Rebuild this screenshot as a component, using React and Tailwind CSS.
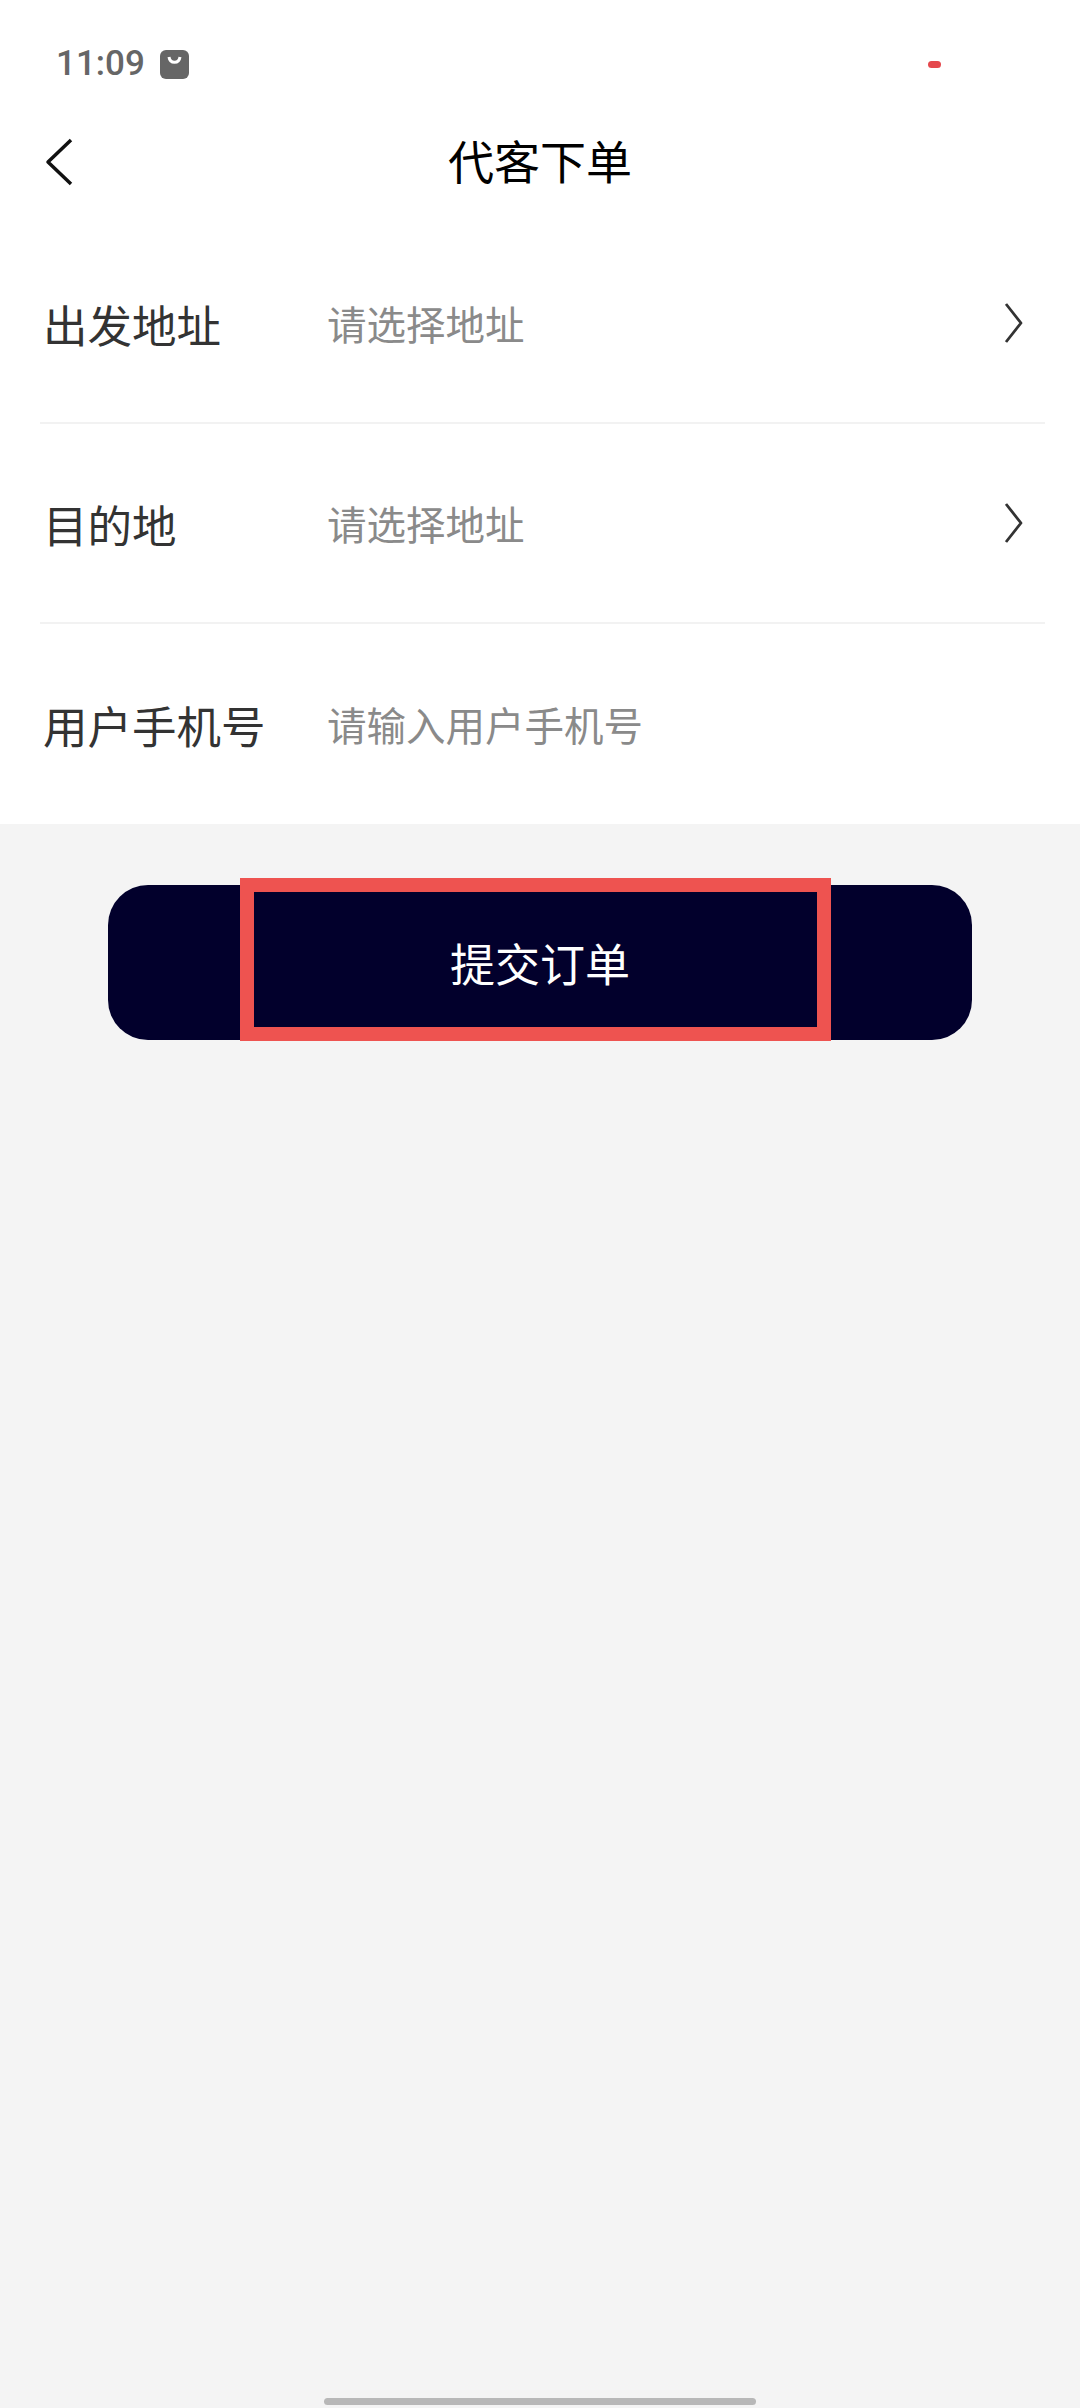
const cjk = "font-['Noto_Sans_CJK_SC','Noto_Sans',sans-serif]";

function FormRow({ label, placeholder, hasArrow, divider }) {
  return (
    <div className={divider ? "flex h-[200px] items-center border-b-2 border-[#f2f2f2]" : "flex h-[200px] items-center"}>
      <span className="w-[287px] shrink-0 pl-[3px] pt-[2px] text-[44.5px] font-normal text-[#333333]">{label}</span>
      <span className="flex-1 text-[39.5px] font-normal text-[#8a8a8a]">{placeholder}</span>
      {hasArrow ? (
        <svg className="mr-[20px] h-[42px] w-[22px]" viewBox="0 0 22 42" fill="none">
          <path d="M3 2 L18 21 L3 40" stroke="#333333" strokeWidth="2.8" strokeLinejoin="round" />
        </svg>
      ) : null}
    </div>
  );
}

export default function App() {
  return (
    <div className={`flex h-[2408px] w-[1080px] flex-col bg-[#f4f4f4] ${cjk}`}>
      <div className="bg-white">
        <div className="flex h-[100px] items-center pl-[56px] pr-[139px] pt-[28px]">
          <span className="font-['Roboto',sans-serif] text-[35px] font-medium text-[#666666]">11:09</span>
          <svg className="ml-[15px] h-[29px] w-[29px]" viewBox="0 0 29 29">
            <rect width="29" height="29" rx="6" fill="#666666" />
            <path d="M9 7 C10 14 19 14 20 7" fill="none" stroke="#ffffff" strokeWidth="3" />
          </svg>
          <span className="ml-auto h-[7px] w-[13px] rounded-full bg-[#e5484d]" />
        </div>

        <div className="relative flex h-[124px] items-start justify-center pt-[23px]">
          <svg className="absolute left-[45px] top-[38px] h-[48px] w-[28px]" viewBox="0 0 28 48" fill="none">
            <path d="M26 2 L3 24 L26 46" stroke="#111111" strokeWidth="3.5" strokeLinejoin="round" />
          </svg>
          <span className="text-[46px] font-normal leading-[72px] text-black">代客下单</span>
        </div>

        <div className="pl-[40px] pr-[35px]">
          <FormRow label="出发地址" placeholder="请选择地址" hasArrow divider />
          <FormRow label="目的地" placeholder="请选择地址" hasArrow divider />
          <FormRow label="用户手机号" placeholder="请输入用户手机号" />
        </div>
      </div>

      <div className="relative mx-[108px] mt-[61px] flex h-[155px] items-center justify-center rounded-[40px] bg-[#02002c]">
        <span className="text-[45px] font-normal text-white">提交订单</span>
        <div className="absolute left-[132px] top-[-7px] h-[163px] w-[591px] border-[14px] border-[#ee5350]" />
      </div>

      <div className="mx-auto mb-[3px] mt-auto h-[7px] w-[432px] rounded-full bg-[#b8b8b8]" />
    </div>
  );
}
